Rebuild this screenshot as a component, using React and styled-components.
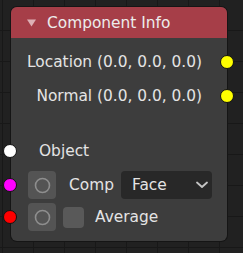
import React from 'react';
import styled, { createGlobalStyle } from 'styled-components';

const Global = createGlobalStyle`
  html, body { margin: 0; padding: 0; }
  body {
    width: 243px;
    height: 253px;
    overflow: hidden;
    background-color: #212121;
    background-image:
      linear-gradient(to right, #181818 1px, transparent 1px),
      linear-gradient(to bottom, #181818 1px, transparent 1px);
    background-size: 31px 31px;
    background-position: 2px 30px;
    font-family: "DejaVu Sans", sans-serif;
  }
`;

const Canvas = styled.div`
  padding: 7px 0 0 11px;
`;

const Node = styled.div`
  width: 216px;
  height: 234px;
  border-radius: 6px;
  background: #3d3d3d;
  box-shadow: 0 0 0 1px #151515;
  display: flex;
  flex-direction: column;
`;

const Header = styled.div`
  height: 31px;
  background: #a63e48;
  border-radius: 6px 6px 0 0;
  display: flex;
  align-items: center;
  padding-left: 16px;
  gap: 11px;
  color: #ececec;
  font-size: 15.4px;
`;

const Body = styled.div`
  flex: 1;
  display: flex;
  flex-direction: column;
  padding: 7px 0 10px;
`;

const OutRow = styled.div`
  position: relative;
  height: 34px;
  display: flex;
  align-items: center;
  justify-content: flex-end;
  padding-right: 25px;
  color: #e4e4e4;
  font-size: 15.4px;
`;

const InRow = styled.div`
  position: relative;
  height: ${p => p.$h}px;
  margin-top: ${p => p.$mt}px;
  display: flex;
  align-items: center;
  padding-left: 17px;
  color: #e4e4e4;
  font-size: 15.4px;
`;

const Socket = styled.span`
  position: absolute;
  top: 50%;
  width: 12px;
  height: 12px;
  margin-top: -7px;
  border: 1px solid #121212;
  border-radius: 50%;
  background: ${p => p.$color};
  ${p => (p.$side === 'left' ? 'left: -8px;' : 'right: -7px;')}
`;

const Label = styled.span`
  margin-left: ${p => p.$ml || 0}px;
  white-space: nowrap;
`;

const IconButton = styled.div`
  width: 28px;
  height: 28px;
  border-radius: 4px;
  background: #545454;
  display: flex;
  align-items: center;
  justify-content: center;
  flex: none;
`;

const Checkbox = styled.div`
  width: 21px;
  height: 21px;
  margin-left: 7px;
  border-radius: 4px;
  background: #595959;
  flex: none;
`;

const Dropdown = styled.div`
  width: 91px;
  height: 28px;
  margin-left: 7px;
  border-radius: 4px;
  background: #282828;
  display: flex;
  align-items: center;
  justify-content: space-between;
  padding: 0 4px 0 11px;
  box-sizing: border-box;
  color: #e4e4e4;
  font-size: 15.4px;
`;

const Ring = () => (
  <svg width="17" height="17" viewBox="0 0 17 17">
    <circle cx="8.5" cy="8.5" r="7" fill="none" stroke="#8e8e8e" strokeWidth="1.6" />
  </svg>
);

const Chevron = () => (
  <svg width="12" height="8" viewBox="0 0 12 8">
    <polyline points="1,1.5 6,6 11,1.5" fill="none" stroke="#c4c4c4" strokeWidth="1.8" strokeLinejoin="round" strokeLinecap="round" />
  </svg>
);

const Arrow = () => (
  <svg width="9" height="8" viewBox="0 0 9 8">
    <polygon points="0,0.5 9,0.5 4.5,7.5" fill="#ddb0b5" />
  </svg>
);

export default function App() {
  return (
    <>
      <Global />
      <Canvas>
        <Node>
          <Header>
            <Arrow />
            <span>Component Info</span>
          </Header>
          <Body>
            <OutRow>
              Location (0.0, 0.0, 0.0)
              <Socket $side="right" $color="#ffff00" />
            </OutRow>
            <OutRow>
              Normal (0.0, 0.0, 0.0)
              <Socket $side="right" $color="#ffff00" />
            </OutRow>
            <InRow $h={32} $mt={22}>
              <Socket $side="left" $color="#ffffff" />
              <Label $ml={11}>Object</Label>
            </InRow>
            <InRow $h={28} $mt={4}>
              <Socket $side="left" $color="#ff00ff" />
              <IconButton><Ring /></IconButton>
              <Label $ml={13}>Comp</Label>
              <Dropdown>
                <span>Face</span>
                <Chevron />
              </Dropdown>
            </InRow>
            <InRow $h={28} $mt={4}>
              <Socket $side="left" $color="#ff0000" />
              <IconButton><Ring /></IconButton>
              <Checkbox />
              <Label $ml={11}>Average</Label>
            </InRow>
          </Body>
        </Node>
      </Canvas>
    </>
  );
}
